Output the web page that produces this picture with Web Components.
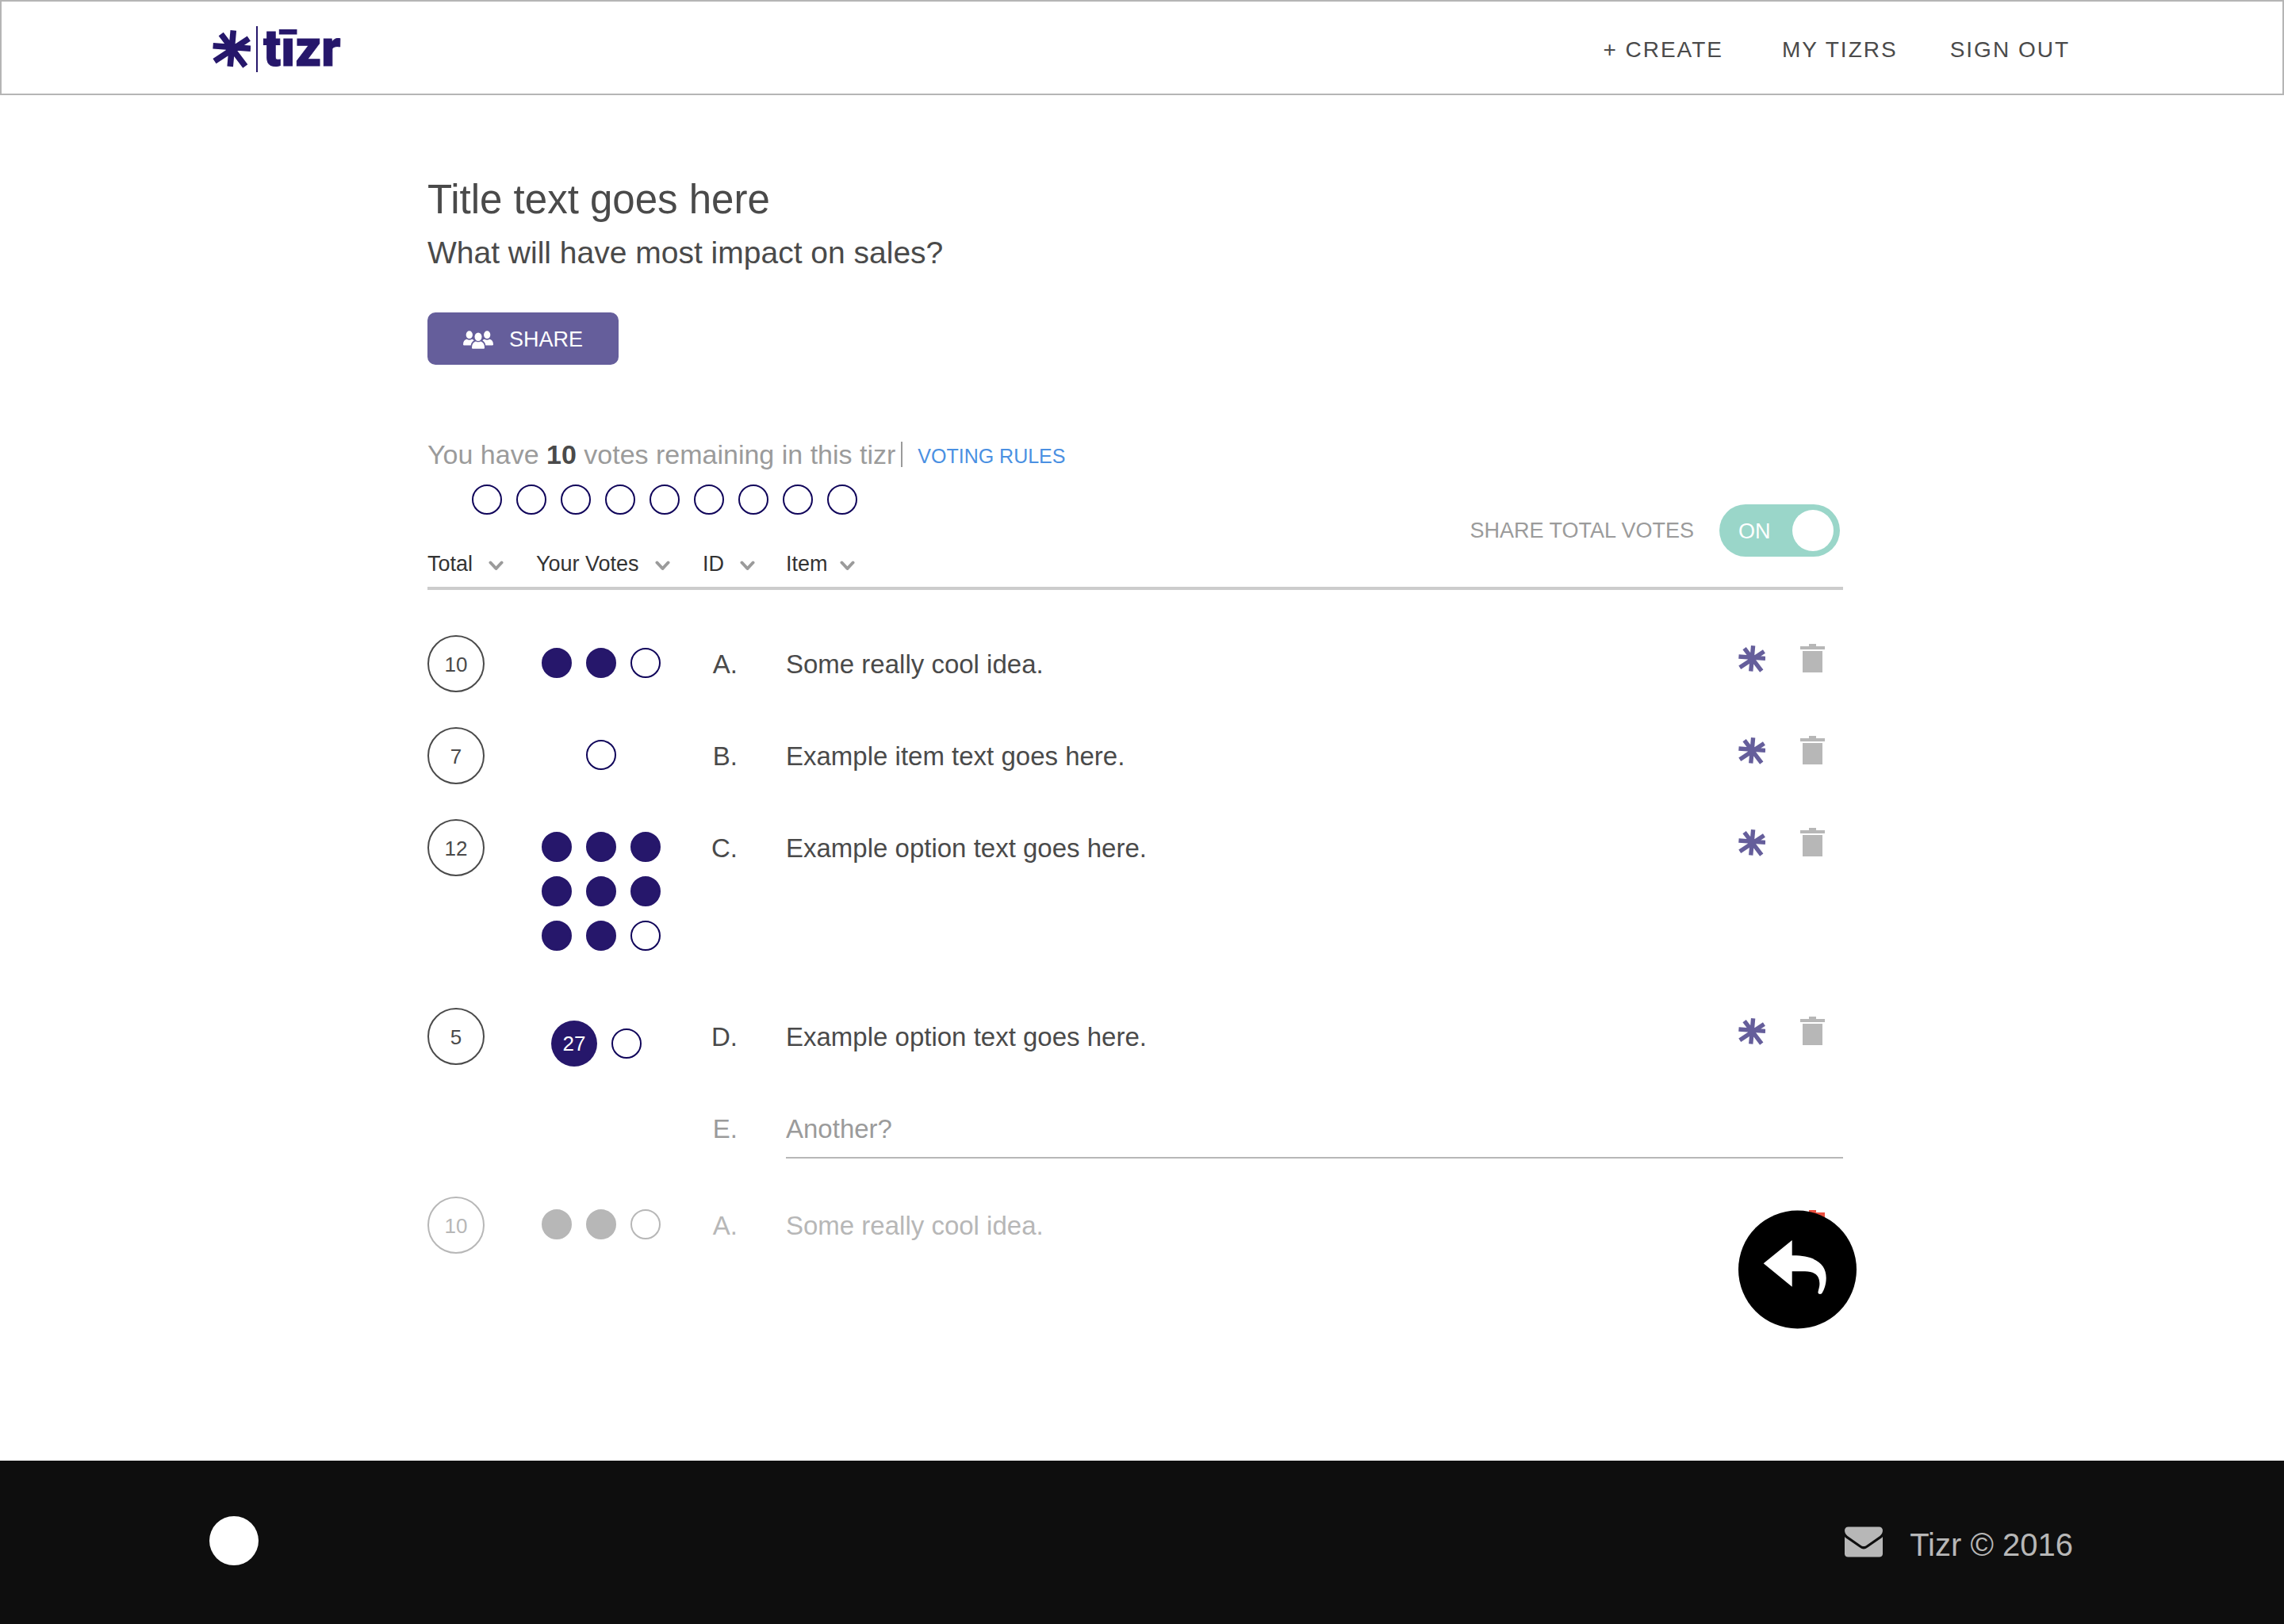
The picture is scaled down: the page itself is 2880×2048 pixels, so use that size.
<!DOCTYPE html>
<html lang="en">
<head>
<meta charset="utf-8">
<meta name="viewport" content="width=device-width, initial-scale=1">
<title>Tizr</title>
<style>
  html, body { margin: 0; }
  body {
    background: #fff;
    color: #4a4a4a;
    font-family: "Liberation Sans", Arial, Helvetica, sans-serif;
  }
</style>
</head>
<body>
<tizr-app></tizr-app>

<script>
const RESET = `
  *, *::before, *::after { box-sizing: border-box; }
  button { font: inherit; color: inherit; background: none; border: 0; padding: 0; margin: 0; cursor: pointer; }
  a { color: inherit; text-decoration: none; }
  svg { display: block; }
`;

function define(name, render) {
  customElements.define(name, class extends HTMLElement {
    connectedCallback() {
      if (this.shadowRoot) return;
      const template = document.createElement('template');
      template.innerHTML = `<style>${RESET}</style>` + render(this);
      this.attachShadow({ mode: 'open' }).append(template.content.cloneNode(true));
    }
  });
}

/* Icons, drawn in their own pixel grid */
const ICONS = {
  asterisk: [48, 48, `<path fill="none" stroke="currentColor" stroke-width="7.600" d="M26.3.4 22.2 45.8M45.8 10.700 2.500 39.200M48 23.200.6 19.700M41.300 45.500 10.700 5"/><circle cx="23.5" cy="22.5" r="7" fill="currentColor"/>`],
  trash: [31, 36, `<path fill="currentColor" d="M11 0h9v3h11v4H0V3h11zM3 9h25v27H3z"/>`],
  chevron: [19, 13, `<path fill="none" stroke="currentColor" stroke-width="4" stroke-linecap="round" stroke-linejoin="round" d="M2.5 2.5 9.500 10 16.500 2.500"/>`],
  people: [38, 23, `<g fill="currentColor"><ellipse cx="7.800" cy="5.200" rx="4.100" ry="4.900"/><ellipse cx="30.200" cy="5.200" rx="4.100" ry="4.900"/><ellipse cx="19" cy="7.800" rx="4.500" ry="5.300"/><path d="M0 17.500C0 13.500 2 11.300 4.500 10.800c2 1.200 4.600 1.200 6.600 0 1 .3 1.800.8 2.500 1.600-2.200 1.200-3.600 3.300-3.900 6H1.200C.4 18.400 0 18.100 0 17.500zM38 17.500c0-4-2-6.200-4.500-6.700-2 1.200-4.600 1.200-6.600 0-1 .3-1.800.8-2.500 1.600 2.200 1.200 3.600 3.300 3.900 6h8.500c.8 0 1.200-.3 1.200-.9z"/><path d="M11 21.200c0-4.400 2-7 5-7.800 1.900 1.200 4.100 1.200 6 0 3 .8 5 3.400 5 7.800 0 1-.5 1.500-1.500 1.500h-13c-1 0-1.500-.5-1.500-1.500z"/></g>`],
  mail: [48, 39, `<path fill="currentColor" d="M4.500.5h39c2.600 0 4.500 2 4.500 4.600 0 3-1.500 5.200-3.600 6.900L28 23.500c-1.400 1-2.600 1.500-4 1.500s-2.600-.5-4-1.500L3.600 12C1.500 10.300 0 8.100 0 5.100 0 2.500 1.900.5 4.500.5zM0 13c.8.900 1.500 1.500 2.300 2.100L19 26.500c1.700 1.200 3.300 1.900 5 1.900s3.300-.7 5-1.900L45.700 15.100c.8-.6 1.500-1.200 2.300-2.100v21.400c0 2.400-1.800 4.100-4.300 4.100H4.300C1.800 38.500 0 36.800 0 34.400z"/>`],
  undo: [150, 150, `<path fill="#ea4f3f" d="M89 0h9v3h11v6H78V3h11z"/><circle cx="74.500" cy="75" r="74.500" fill="#000"/><path fill="#fff" d="M31.700 67.300 67.700 38v19.300C97 57 111 68 110.700 86c-.1 8-2.500 14.500-5.200 18.800-1.500 2-5.500 1.400-5-1.600.6-3.200 1.900-6.400 1.900-10.200 0-11-6.400-15.500-18.400-15.700H67.700v19.400z"/>`]
};
define('tizr-icon', el => {
  const [w, h, body] = ICONS[el.getAttribute('name')];
  const width = Number(el.getAttribute('width')) || w;
  const height = Math.round(width * h / w);
  return `<style>:host { display: block; flex: none; }</style>
    <svg width="${width}" height="${height}" viewBox="0 0 ${w} ${h}" aria-hidden="true">${body}</svg>`;
});

define('tizr-logo', () => `
  <style>
    :host { display: block; color: #26176b; padding-top: 4px; }
    a { display: flex; align-items: center; gap: 7px; }
    .rule { width: 2px; height: 58px; background: currentColor; }
    .word { font: 900 64px/72px Roboto, "Liberation Sans", sans-serif; -webkit-text-stroke: 1px currentColor; }
  </style>
  <a href="#" aria-label="tizr home">
    <tizr-icon name="asterisk"></tizr-icon>
    <span class="rule"></span>
    <span class="word">tīzr</span>
  </a>`);

define('tizr-header', () => `
  <style>
    :host { display: block; }
    header {
      display: flex; align-items: center; justify-content: space-between;
      height: 120px; padding: 0 268px 0 266px; border: 2px solid #b5b5b5;
    }
    nav { display: flex; gap: 66px; padding-top: 6px; font-size: 28px; line-height: 32px; letter-spacing: 2px; }
    .create { margin-right: 8px; }
  </style>
  <header>
    <tizr-logo></tizr-logo>
    <nav>
      <a class="create" href="#create">+ CREATE</a>
      <a href="#mine">MY TIZRS</a>
      <a href="#out">SIGN OUT</a>
    </nav>
  </header>`);

define('share-button', () => `
  <style>
    :host { display: block; }
    button {
      display: flex; align-items: center; gap: 20px;
      height: 66px; padding: 2px 45px 0; border-radius: 10px;
      background: #655e9b; color: #fff; font-size: 27px; line-height: 32px;
    }
  </style>
  <button type="button"><tizr-icon name="people"></tizr-icon><slot></slot></button>`);

/* Row of votes: filled, open, and optionally one large counter */
define('vote-dots', el => {
  const filled = Number(el.getAttribute('filled')) || 0;
  const open = Number(el.getAttribute('open')) || 0;
  const count = el.getAttribute('count');
  return `
  <style>
    :host { display: flex; flex-wrap: wrap; align-items: center; justify-content: center; gap: 18px; --fill: #26176b; --line: #10055a; }
    :host([muted]) { --fill: #b7b7b7; --line: #b7b7b7; }
    :host([count]) { padding-right: 12px; }
    i { width: 38px; height: 38px; border-radius: 50%; border: 2px solid var(--line); }
    i.full { background: var(--fill); border-color: var(--fill); }
    b {
      display: flex; align-items: center; justify-content: center;
      width: 58px; height: 58px; border-radius: 50%;
      background: var(--fill); color: #fff; font-size: 26px; line-height: 32px; font-weight: 400;
    }
  </style>
  ${count ? `<b>${count}</b>` : ''}${'<i class="full"></i>'.repeat(filled)}${'<i></i>'.repeat(open)}`;
});

define('total-badge', () => `
  <style>
    :host {
      display: flex; align-items: center; justify-content: center; box-sizing: border-box;
      width: 72px; height: 72px; padding-top: 2px; border: 2px solid currentColor; border-radius: 50%;
      font-size: 26px; line-height: 32px;
    }
  </style>
  <slot></slot>`);

define('toggle-switch', () => `
  <style>
    :host { display: block; }
    label { display: flex; align-items: center; justify-content: flex-end; gap: 32px; color: #9b9b9b; font-size: 27px; line-height: 32px; }
    .switch { position: relative; display: block; width: 152px; height: 66px; }
    input {
      appearance: none; display: flex; align-items: center; justify-content: flex-end;
      width: 100%; height: 100%; margin: 0; padding: 0 8px;
      border-radius: 33px; background: #9ad6c9; cursor: pointer;
    }
    input::before { content: ""; width: 52px; height: 52px; border-radius: 50%; background: #fff; }
    input:not(:checked) { justify-content: flex-start; background: #b7b7b7; }
    .state { position: absolute; left: 24px; top: 18px; color: #fff; pointer-events: none; }
  </style>
  <label for="switch">
    <slot></slot>
    <span class="switch"><input id="switch" type="checkbox" checked><span class="state">ON</span></span>
  </label>`);

define('sort-button', () => `
  <style>
    :host { display: block; }
    button { display: flex; align-items: center; gap: 20px; color: #333; font-size: 27px; line-height: 32px; white-space: nowrap; }
    tizr-icon { color: #9b9b9b; padding-top: 4px; }
    :host([tight]) button { gap: 15px; }
  </style>
  <button type="button"><slot></slot><tizr-icon name="chevron"></tizr-icon></button>`);

define('row-actions', () => `
  <style>
    :host { display: flex; align-items: flex-end; justify-content: flex-end; gap: 44px; padding: 11px 23px 0 0; }
    .vote { color: #655e9b; }
    .remove { color: #b7b7b7; }
  </style>
  <button class="vote" type="button" aria-label="Vote"><tizr-icon name="asterisk" width="34"></tizr-icon></button>
  <button class="remove" type="button" aria-label="Delete"><tizr-icon name="trash"></tizr-icon></button>`);

const ROWS = [
  { id: 'A.', total: 10, text: 'Some really cool idea.', votes: 'filled="2" open="1"' },
  { id: 'B.', total: 7, text: 'Example item text goes here.', votes: 'open="1"' },
  { id: 'C.', total: 12, text: 'Example option text goes here.', votes: 'filled="8" open="1"', tall: true },
  { id: 'D.', total: 5, text: 'Example option text goes here.', votes: 'count="27" open="1"' }
];

define('vote-table', () => `
  <style>
    :host { display: block; }
    table { width: 100%; border-collapse: collapse; table-layout: fixed; font-size: 33px; line-height: 40px; }
    .c-total { width: 137px; } .c-votes { width: 210px; } .c-id { width: 105px; } .c-actions { width: 480px; }
    th, td { padding: 0; font-weight: 400; text-align: left; vertical-align: top; }
    thead th { vertical-align: bottom; padding-bottom: 13px; border-bottom: 4px solid #ccc; font-size: 27px; line-height: 32px; }
    thead th:last-child { padding: 0 4px 38px 0; }
    .space td { height: 59px; }
    .row { height: 116px; }
    .tall { height: 238px; }
    td.votes { padding-top: 16px; }
    vote-dots { width: 150px; margin-left: 7px; }
    td.id { padding: 17px 61px 0 0; text-align: right; }
    td.item { padding-top: 17px; }
    .new td.item { padding-bottom: 48px; }
    .new { color: #9b9b9b; }
    .deleted { color: #b7b7b7; }
    .deleted .undo { padding-top: 17px; }
    .undo button { display: block; margin: 0 -18px 0 auto; }
    input {
      display: block; width: 100%; height: 57px; padding: 0 0 15px; border: 0; border-bottom: 2px solid #b7b7b7;
      background: none; font: inherit; color: #4a4a4a; outline: 0;
    }
    input::placeholder { color: #9b9b9b; opacity: 1; }
  </style>
  <table>
    <colgroup><col class="c-total"><col class="c-votes"><col class="c-id"><col><col class="c-actions"></colgroup>
    <thead>
      <tr>
        <th scope="col"><sort-button>Total</sort-button></th>
        <th scope="col"><sort-button>Your Votes</sort-button></th>
        <th scope="col"><sort-button>ID</sort-button></th>
        <th scope="col"><sort-button tight>Item</sort-button></th>
        <th><toggle-switch>SHARE TOTAL VOTES</toggle-switch></th>
      </tr>
    </thead>
    <tbody>
      <tr class="space"><td colspan="5"></td></tr>
      ${ROWS.map(r => `
      <tr class="row ${r.tall ? 'tall' : ''}">
        <td><total-badge>${r.total}</total-badge></td>
        <td class="votes"><vote-dots ${r.votes}></vote-dots></td>
        <td class="id">${r.id}</td>
        <td class="item">${r.text}</td>
        <td><row-actions></row-actions></td>
      </tr>`).join('')}
      <tr class="new">
        <td></td><td></td>
        <td class="id"><label for="another">E.</label></td>
        <td class="item" colspan="2"><input id="another" type="text" placeholder="Another?"></td>
      </tr>
      <tr class="deleted">
        <td><total-badge>10</total-badge></td>
        <td class="votes"><vote-dots muted filled="2" open="1"></vote-dots></td>
        <td class="id">A.</td>
        <td class="item">Some really cool idea.</td>
        <td class="undo"><button type="button" aria-label="Undo"><tizr-icon name="undo"></tizr-icon></button></td>
      </tr>
    </tbody>
  </table>`);

define('votes-remaining', () => `
  <style>
    :host { display: block; }
    .line { display: flex; align-items: center; color: #9b9b9b; font-size: 34px; line-height: 40px; }
    p { margin: 0; }
    strong { color: #4a4a4a; }
    .rule { width: 2px; height: 32px; margin: 0 19px 0 7px; background: #9b9b9b; }
    a { color: #4a90e2; font-size: 25px; line-height: 32px; padding-top: 4px; }
    vote-dots { justify-content: flex-start; padding: 18px 0 0 56px; }
  </style>
  <div class="line">
    <p>You have <strong>10</strong> votes remaining in this tizr</p>
    <span class="rule"></span>
    <a href="#rules">VOTING RULES</a>
  </div>
  <vote-dots open="9"></vote-dots>`);

define('tizr-footer', () => `
  <style>
    :host { display: block; }
    footer {
      display: flex; align-items: center; justify-content: space-between;
      height: 206px; padding: 0 266px 4px 264px; background: #0e0e0e; color: #b7b7b7; font-size: 40px; line-height: 48px;
    }
    .mark { width: 62px; height: 62px; border-radius: 50%; background: #fff; }
    .info { display: flex; align-items: center; gap: 34px; padding-top: 3px; }
    .info span { padding-top: 6px; }
  </style>
  <footer>
    <span class="mark"></span>
    <div class="info">
      <a href="#contact" aria-label="Contact"><tizr-icon name="mail"></tizr-icon></a>
      <span>Tizr © 2016</span>
    </div>
  </footer>`);

define('tizr-app', () => `
  <style>
    :host { display: flex; flex-direction: column; min-height: 100vh; }
    main { flex: 1; padding: 102px 556px 64px 539px; }
    h1 { margin: 0; font-size: 51px; line-height: 60px; font-weight: 400; }
    h2 { margin: 13px 0 0; font-size: 39px; line-height: 48px; font-weight: 400; }
    share-button { width: fit-content; margin-top: 51px; }
    votes-remaining { margin-top: 93px; }
    vote-table { margin-top: -13px; }
  </style>
  <tizr-header></tizr-header>
  <main>
    <h1>Title text goes here</h1>
    <h2>What will have most impact on sales?</h2>
    <share-button>SHARE</share-button>
    <votes-remaining></votes-remaining>
    <vote-table></vote-table>
  </main>
  <tizr-footer></tizr-footer>`);
</script>
</body>
</html>
